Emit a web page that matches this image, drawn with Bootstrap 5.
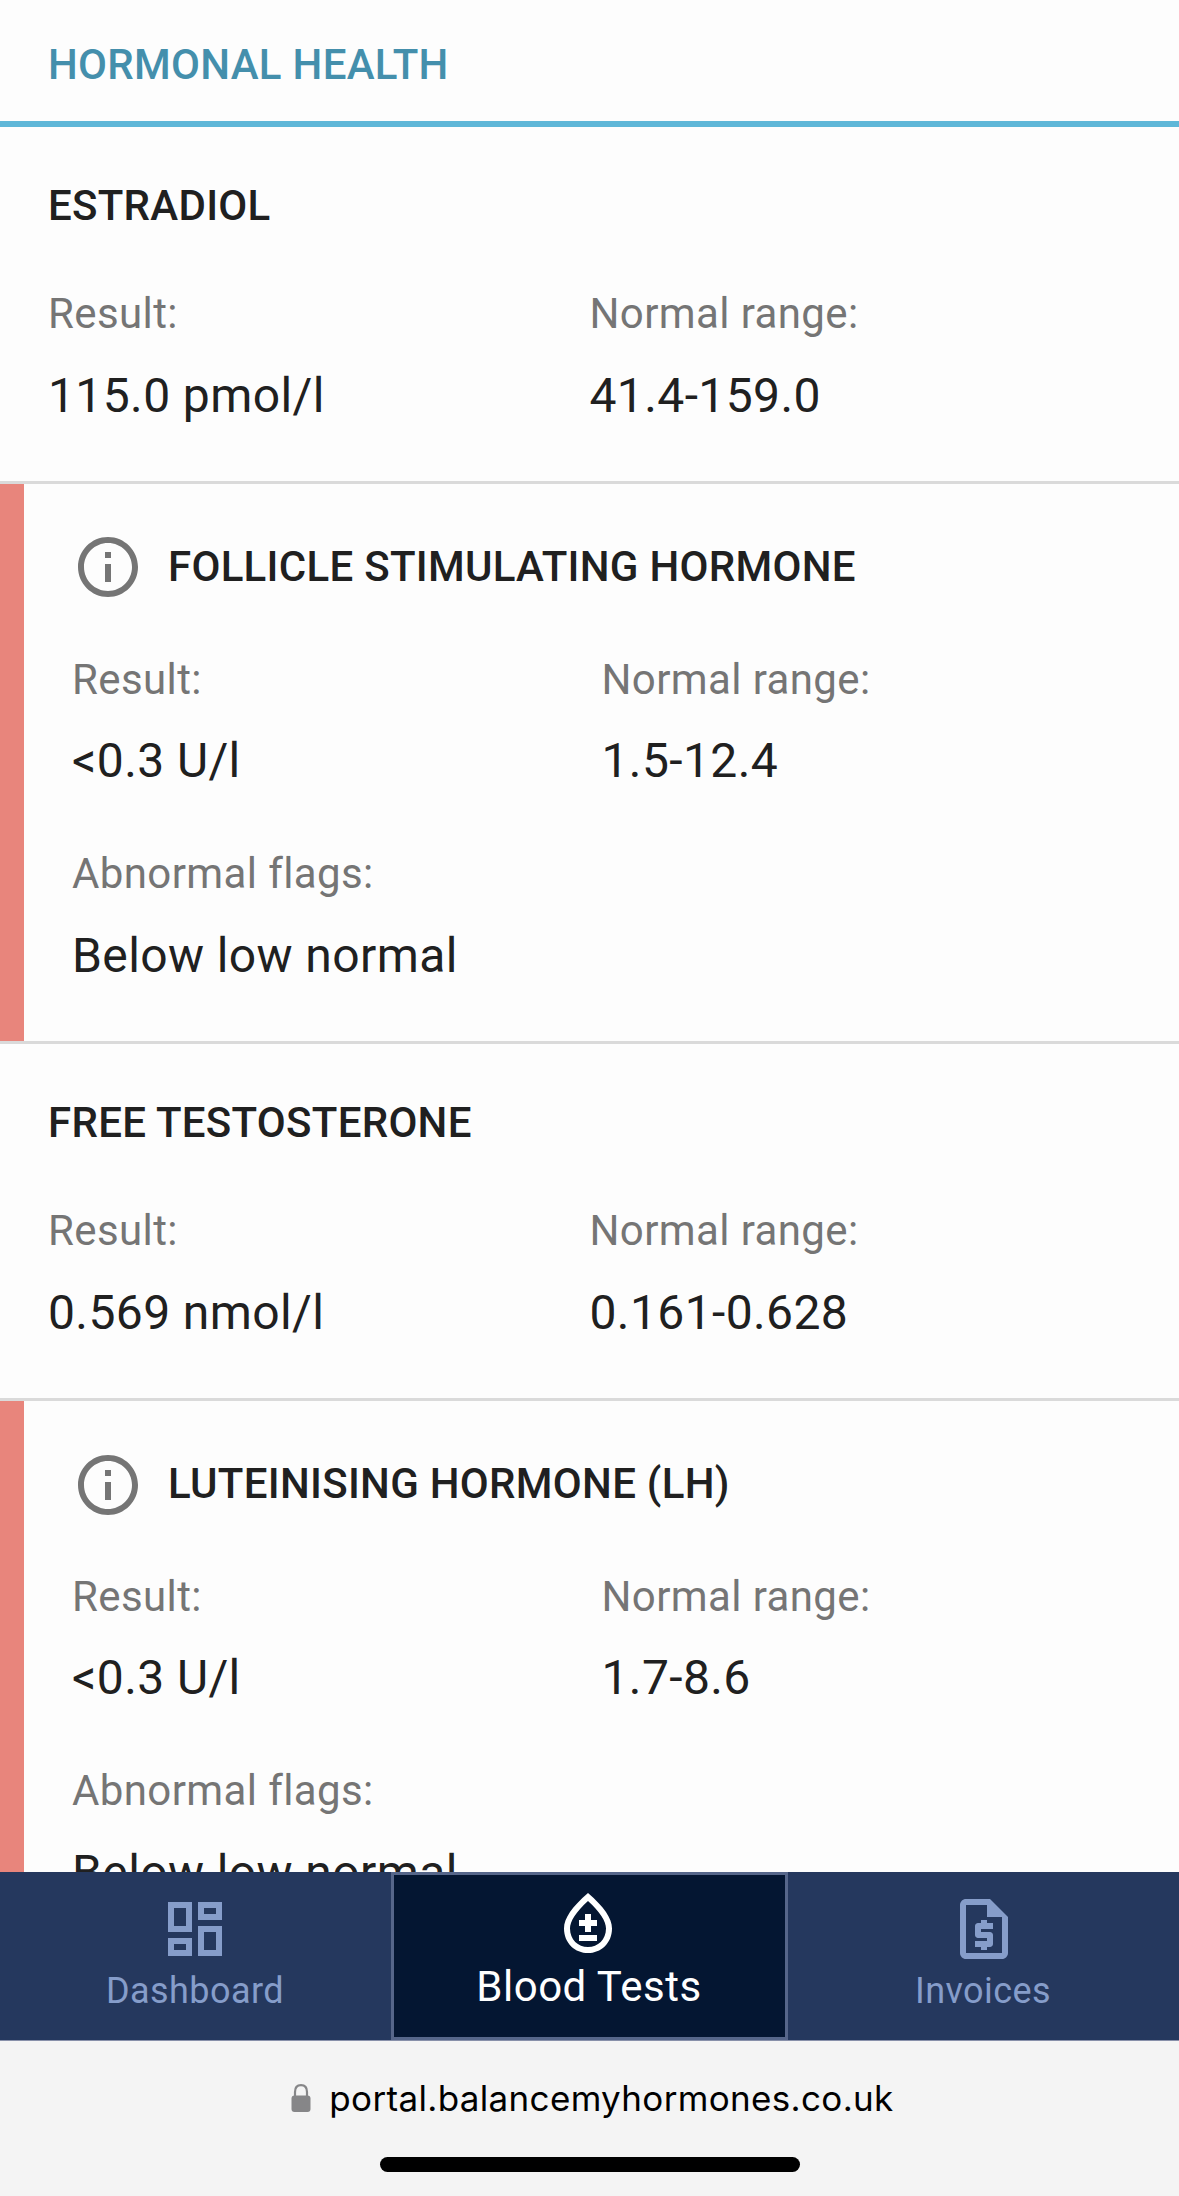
<!DOCTYPE html>
<html lang="en">
<head>
<meta charset="utf-8">
<meta name="viewport" content="width=device-width, initial-scale=1">
<title>Blood Tests</title>
<link href="https://cdn.jsdelivr.net/npm/bootstrap@5.3.0/dist/css/bootstrap.min.css" rel="stylesheet">
<style>
  body { background: #fdfdfd; color: #202020; font-family: Roboto, "Liberation Sans", sans-serif; }
  .screen { height: 2196px; }
  .results { min-height: 0; }

  .group-head { height: 127px; padding: 35px 48px 0; border-bottom: 6px solid #5fb7d8; color: #448fac; }
  .heading { font-size: 42px; line-height: 60px; font-weight: 500; letter-spacing: .0068em; }

  .result { padding: 49px 48px; border-bottom: 3px solid #dadada; }
  .result .heading { margin-bottom: 48px; }
  .caption-text { font-size: 42px; line-height: 60px; letter-spacing: .0092em; color: #757575; margin-bottom: 16px; }
  .value-text { font-size: 48px; line-height: 72px; letter-spacing: .0082em; }

  .abnormal { position: relative; padding: 47px 48px 49px 72px; }
  .abnormal::before { content: ""; position: absolute; left: 0; top: 0; bottom: 0; width: 24px; background: #e8857c; }
  .abnormal .title-line { gap: 24px; margin-bottom: 47px; }
  .abnormal .heading { line-height: 72px; margin-bottom: 0; }
  .abnormal .caption-text { margin-bottom: 15px; }
  .abnormal .flags { margin-top: 47px; }
  .abnormal .flags .caption-text { margin-bottom: 16px; }
  .icon-72 { width: 72px; height: 72px; flex: none; }

  .tabbar { height: 169px; background: #25385e; border-bottom: 1px solid #8890aa; }
  .tab { color: #869dca; font-size: 36px; line-height: 54px; letter-spacing: .0115em; text-decoration: none; padding-top: 21px; width: 391px; }
  .tab-current { width: 397px; border: 3px solid #56668a; background: #041632; color: #fff; font-size: 42px; line-height: 60px; letter-spacing: .0115em; padding-top: 12px; }
  .tab span { margin-top: -1px; margin-right: 1px; }
  .tab-current span { margin-top: -2px; }
  .tab svg { margin-right: 1px; }
  .tab-current svg { margin-right: 3px; }
  .tab:last-child svg { margin: 0 0 0 1px; }

  .browser-bar { height: 155px; background: #f4f4f4; color: #000; }
  .address { font: 400 35px/48px Inter, sans-serif; letter-spacing: .335px; padding: 33px 0 0 6px; gap: 18px; }
  .home-indicator { width: 420px; height: 15px; border-radius: 8px; background: #000; margin-top: 35px; }
</style>
<script src="https://cdn.jsdelivr.net/npm/bootstrap@5.3.0/dist/js/bootstrap.bundle.min.js"></script>
</head>
<body>
<div class="screen d-flex flex-column overflow-hidden">
  <main class="results flex-fill overflow-hidden">
    <header class="group-head"><h1 class="heading m-0">HORMONAL HEALTH</h1></header>

    <section class="result">
      <h2 class="heading mt-0">ESTRADIOL</h2>
      <div class="row g-0">
        <div class="col-6"><div class="caption-text">Result:</div><div class="value-text">115.0 pmol/l</div></div>
        <div class="col-6"><div class="caption-text">Normal range:</div><div class="value-text">41.4-159.0</div></div>
      </div>
    </section>

    <section class="result abnormal">
      <div class="title-line d-flex">
        <svg class="icon-72" viewBox="0 0 24 24" fill="#757575"><path d="M11 7h2v2h-2zm0 4h2v6h-2zm1-9C6.48 2 2 6.48 2 12s4.48 10 10 10 10-4.48 10-10S17.52 2 12 2zm0 18c-4.41 0-8-3.59-8-8s3.59-8 8-8 8 3.59 8 8-3.59 8-8 8z"/></svg>
        <h2 class="heading">FOLLICLE STIMULATING HORMONE</h2>
      </div>
      <div class="row g-0">
        <div class="col-6"><div class="caption-text">Result:</div><div class="value-text">&lt;0.3 U/l</div></div>
        <div class="col-6"><div class="caption-text">Normal range:</div><div class="value-text">1.5-12.4</div></div>
        <div class="col-12 flags"><div class="caption-text">Abnormal flags:</div><div class="value-text">Below low normal</div></div>
      </div>
    </section>

    <section class="result">
      <h2 class="heading mt-0">FREE TESTOSTERONE</h2>
      <div class="row g-0">
        <div class="col-6"><div class="caption-text">Result:</div><div class="value-text">0.569 nmol/l</div></div>
        <div class="col-6"><div class="caption-text">Normal range:</div><div class="value-text">0.161-0.628</div></div>
      </div>
    </section>

    <section class="result abnormal">
      <div class="title-line d-flex">
        <svg class="icon-72" viewBox="0 0 24 24" fill="#757575"><path transform="translate(0 .333)" d="M11 7h2v2h-2zm0 4h2v6h-2zm1-9C6.48 2 2 6.48 2 12s4.48 10 10 10 10-4.48 10-10S17.52 2 12 2zm0 18c-4.41 0-8-3.59-8-8s3.59-8 8-8 8 3.59 8 8-3.59 8-8 8z"/></svg>
        <h2 class="heading">LUTEINISING HORMONE (LH)</h2>
      </div>
      <div class="row g-0">
        <div class="col-6"><div class="caption-text">Result:</div><div class="value-text">&lt;0.3 U/l</div></div>
        <div class="col-6"><div class="caption-text">Normal range:</div><div class="value-text">1.7-8.6</div></div>
        <div class="col-12 flags"><div class="caption-text">Abnormal flags:</div><div class="value-text">Below low normal</div></div>
      </div>
    </section>
  </main>

  <nav class="tabbar d-flex flex-shrink-0">
    <a class="tab d-flex flex-column align-items-center" href="#">
      <svg class="icon-72" viewBox="0 0 24 24" fill="currentColor"><path d="M19 5v2h-4V5h4M9 5v6H5V5h4m10 8v6h-4v-6h4M9 17v2H5v-2h4M21 3h-8v6h8V3zM11 3H3v10h8V3zm10 8h-8v10h8V11zm-10 4H3v6h8v-6z"/></svg>
      <span>Dashboard</span>
    </a>
    <a class="tab tab-current d-flex flex-column align-items-center" href="#" aria-current="page">
      <svg class="icon-72" viewBox="0 0 24 24" fill="currentColor"><path d="M12 2c-5.33 4.55-8 8.48-8 11.8 0 4.98 3.8 8.2 8 8.2s8-3.22 8-8.2C20 10.48 17.33 6.55 12 2zm0 18c-3.35 0-6-2.57-6-6.2 0-2.34 1.95-5.44 6-9.14 4.05 3.7 6 6.79 6 9.14 0 3.63-2.65 6.2-6 6.2z"/><path d="M13 11h2v2h-2v2h-2v-2H9v-2h2V9h2zM9 16h6v2H9z"/></svg>
      <span>Blood Tests</span>
    </a>
    <a class="tab d-flex flex-column align-items-center" href="#">
      <svg class="icon-72" viewBox="0 0 24 24" fill="currentColor"><path d="M14 2H6c-1.100 0-2 .9-2 2v16c0 1.100.9 2 2 2h12c1.100 0 2-.9 2-2V8l-6-6zM6 20V4h7v4h5v12H6z"/><path d="M11 19h2v-1h1c.55 0 1-.45 1-1v-3c0-.55-.45-1-1-1h-3v-1h4v-2h-2V9h-2v1h-1c-.55 0-1 .45-1 1v3c0 .55.45 1 1 1h3v1H9v2h2v1z"/></svg>
      <span>Invoices</span>
    </a>
  </nav>

  <footer class="browser-bar flex-shrink-0 d-flex flex-column align-items-center">
    <div class="address d-flex align-items-center">
      <svg width="20" height="28" viewBox="0 0 20 28"><rect x=".5" y="11.500" width="19" height="16.500" rx="3" fill="#868688"/><path d="M4 12.500V8C4 3.500 6.500 1.200 10 1.200S16 3.500 16 8v4.500" fill="none" stroke="#868688" stroke-width="2.200"/></svg>
      <span>portal.balancemyhormones.co.uk</span>
    </div>
    <div class="home-indicator"></div>
  </footer>
</div>
</body>
</html>
